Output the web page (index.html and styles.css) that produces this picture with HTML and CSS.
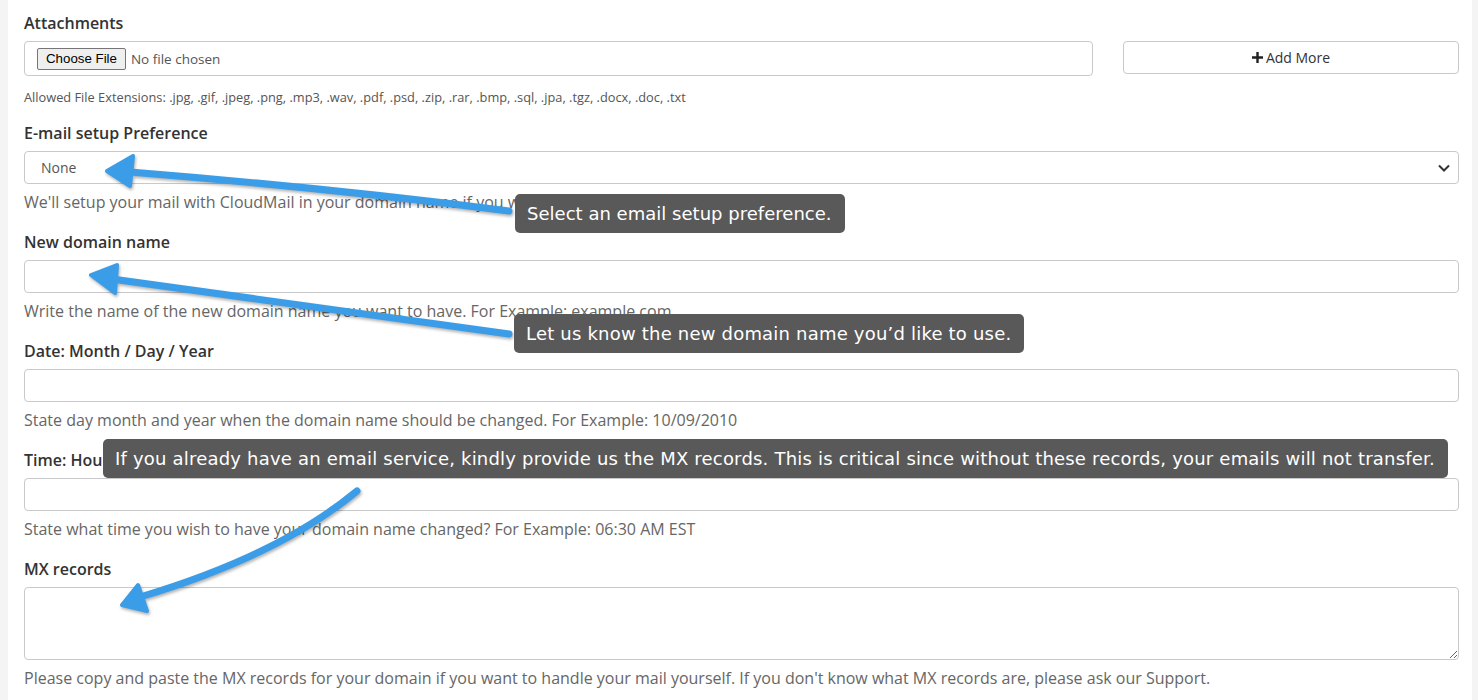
FILE: index.html
```html
<!DOCTYPE html>
<html lang="en">
<head>
<meta charset="utf-8">
<title>Domain form</title>
<link rel="stylesheet" href="styles.css">
</head>
<body>
<div class="page">
  <form class="panel">
    <div class="group group-attach">
      <label class="lbl">Attachments</label>
      <div class="attach-row">
        <div class="file-box">
          <button type="button" class="file-btn">Choose File</button>
          <span class="file-name">No file chosen</span>
        </div>
        <button type="button" class="add-btn">
          <svg class="plus" width="11" height="11" viewBox="0 0 11 11"><path d="M5.5 0v11M0 5.5h11" stroke="#222" stroke-width="2.4"/></svg>
          <span>Add More</span>
        </button>
      </div>
      <p class="ext">Allowed File Extensions: .jpg, .gif, .jpeg, .png, .mp3, .wav, .pdf, .psd, .zip, .rar, .bmp, .sql, .jpa, .tgz, .docx, .doc, .txt</p>
    </div>

    <div class="group">
      <label class="lbl">E-mail setup Preference</label>
      <div class="select-wrap">
        <select class="ctl select"><option>None</option></select>
        <svg class="chev" width="12" height="8" viewBox="0 0 12 8"><path d="M1 1.5l5 5 5-5" fill="none" stroke="#333" stroke-width="2"/></svg>
      </div>
      <p class="help">We'll setup your mail with CloudMail in your domain name if you want us to do so.</p>
    </div>

    <div class="group">
      <label class="lbl">New domain name</label>
      <input class="ctl" type="text">
      <p class="help">Write the name of the new domain name you want to have. For Example: example.com</p>
    </div>

    <div class="group">
      <label class="lbl">Date: Month / Day / Year</label>
      <input class="ctl" type="text">
      <p class="help">State day month and year when the domain name should be changed. For Example: 10/09/2010</p>
    </div>

    <div class="group">
      <label class="lbl">Time: Hour/Minute/Timezone</label>
      <input class="ctl" type="text">
      <p class="help">State what time you wish to have your domain name changed? For Example: 06:30 AM EST</p>
    </div>

    <div class="group">
      <label class="lbl">MX records</label>
      <textarea class="ctl area"></textarea>
      <p class="help">Please copy and paste the MX records for your domain if you want to handle your mail yourself. If you don't know what MX records are, please ask our Support.</p>
    </div>
  </form>

  <svg class="arrows" width="1478" height="700" viewBox="0 0 1478 700">
    <g fill="#3b9de7" stroke="#3b9de7" stroke-linecap="round" stroke-linejoin="round">
      <path d="M509 211 Q330 188 130 172" fill="none" stroke-width="7"/>
      <polygon points="107,171 133,156 130,186" stroke-width="4"/>
      <path d="M509 334 Q320 308 112 279" fill="none" stroke-width="7"/>
      <polygon points="91,275 117,265 115,293" stroke-width="4"/>
      <path d="M357 491 Q280 555 140 597" fill="none" stroke-width="7"/>
      <polygon points="122,605 138,585 147,611" stroke-width="4"/>
    </g>
  </svg>

  <div class="tip tip1">Select an email setup preference.</div>
  <div class="tip tip2">Let us know the new domain name you’d like to use.</div>
  <div class="tip tip3">If you already have an email service, kindly provide us the MX records. This is critical since without these records, your emails will not transfer.</div>
</div>
</body>
</html>
```

FILE: styles.css
```css
* { box-sizing: border-box; }
html, body { margin: 0; padding: 0; }
body {
  background: #f4f4f4;
  font-family: "Open Sans", "Liberation Sans", sans-serif;
  color: #333;
}
.page {
  position: relative;
  width: 1478px;
  height: 700px;
  overflow: hidden;
}
.panel {
  margin: 0 6px 0 8px;
  background: #fff;
  padding: 12px 13px 0 16px;
  height: 700px;
}
.group { margin-bottom: 18px; }
.group-attach { margin-bottom: 16px; }
.lbl {
  display: block;
  font-size: 16px;
  line-height: 22px;
  font-weight: 600;
  color: #333;
  margin-bottom: 7px;
}
.attach-row {
  display: grid;
  grid-template-columns: 1069px 336px;
  gap: 30px;
  align-items: start;
}
.file-box {
  height: 35px;
  border: 1px solid #c9c9c9;
  border-radius: 4px;
  display: flex;
  align-items: center;
  padding-left: 12px;
}
.file-btn {
  font-family: "Liberation Sans", Arial, sans-serif;
  font-size: 13.3px;
  color: #000;
  background: #efefef;
  border: 1px solid #767676;
  border-radius: 2px;
  height: 22px;
  padding: 0 8px;
  margin: 0 5px 0 0;
}
.file-name {
  font-size: 13.5px;
  color: #555;
}
.add-btn {
  height: 33px;
  background: #fff;
  border: 1px solid #c9c9c9;
  border-radius: 4px;
  font-family: "Open Sans", "Liberation Sans", sans-serif;
  font-size: 14px;
  color: #333;
  display: flex;
  align-items: center;
  justify-content: center;
  gap: 3px;
  padding: 0;
}
.ext {
  margin: 12px 0 0;
  font-size: 12.8px;
  line-height: 18px;
  color: #555;
}
.ctl {
  display: block;
  width: 100%;
  height: 33px;
  border: 1px solid #c9c9c9;
  border-radius: 4px;
  background: #fff;
  font-family: "Open Sans", "Liberation Sans", sans-serif;
  font-size: 14px;
  color: #555;
  margin: 0;
}
.select-wrap { position: relative; }
.select {
  appearance: none;
  -webkit-appearance: none;
  padding: 0 16px;
}
.chev {
  position: absolute;
  right: 9px;
  top: 13px;
}
.area {
  height: 73px;
  resize: vertical;
}
.help {
  margin: 7px 0 0;
  font-size: 16px;
  line-height: 22px;
  color: #666;
}
.arrows {
  position: absolute;
  left: 0;
  top: 0;
  pointer-events: none;
  filter: drop-shadow(1px 2px 1.5px rgba(0,0,0,0.3));
}
.tip {
  position: absolute;
  background: #595959;
  color: #fff;
  font-family: "DejaVu Sans", "Open Sans", sans-serif;
  font-size: 18px;
  letter-spacing: 0.2px;
  line-height: 23px;
  padding: 8px 13px 8px 12px;
  border-radius: 5px;
  white-space: nowrap;
}
.tip1 { left: 515px; top: 194px; letter-spacing: 0.02px; }
.tip2 { left: 514px; top: 314px; }
.tip3 { left: 103px; top: 439px; }
```
